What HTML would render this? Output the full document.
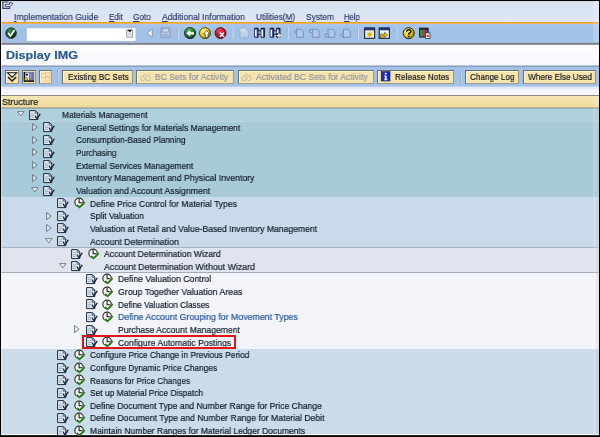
<!DOCTYPE html>
<html><head><meta charset="utf-8"><title>Display IMG</title>
<style>
html,body{margin:0;padding:0;}
body{width:600px;height:437px;overflow:hidden;background:#fff;position:relative;font-family:"Liberation Sans",sans-serif;}
#w{position:absolute;left:1.5px;top:1px;width:596.5px;height:434px;background:#fff;overflow:hidden;}
.a{position:absolute;}
.t{will-change:transform;-webkit-text-stroke:0.2px currentColor;position:absolute;white-space:nowrap;transform-origin:0 0;display:block;}
.t u{text-decoration:underline;}
.i{position:absolute;overflow:visible;}
.band{position:absolute;left:0;width:600px;}
.b{position:absolute;top:70.2px;height:13.4px;box-sizing:border-box;background:#f7e3ac;border:1px solid;border-color:#6a6e68 #9c9883 #9c9883 #6a6e68;box-shadow:inset 1px 1px 0 #fdf3d2;}
.b.dis{background:#f6e3ae;border-color:#70746e #a29e89 #a29e89 #70746e;}
.sep{position:absolute;width:1px;background:#9cb2d2;box-shadow:1px 0 0 #bdd0ec;}
</style></head><body>
<!-- menu bar -->
<div class="band" style="top:1px;height:21px;background:linear-gradient(#c9d2e0 0,#d8e3f2 1.5px,#dae4f3 13px,#e1e5f8 18px,#e4e6fa 21px);"></div>
<div class="band" style="top:22px;height:1px;background:#e8a234;"></div>
<div class="band" style="top:23px;height:1px;background:#ebb353;"></div>
<!-- std toolbar -->
<div class="band" style="top:24px;height:18px;background:linear-gradient(#a9c7ea,#a1c1e7 30%,#a1c1e7 90%,#a7c3e6);"></div>
<div class="band" style="top:42px;height:1px;background:#a6b6cf;"></div>
<div class="band" style="top:43px;height:1px;background:#7b8492;"></div>
<div class="band" style="top:44px;height:1px;background:#8f97a4;"></div>
<!-- title -->
<div class="band" style="top:45px;height:20px;background:linear-gradient(#fff,#f6f8fc);"></div>
<div class="band" style="top:65px;height:1px;background:#b9c6d9;"></div>
<div class="band" style="top:66px;height:1px;background:#8a9fbe;"></div>
<!-- app toolbar -->
<div class="band" style="top:67px;height:19px;background:#a4c2e7;"></div>
<div class="band" style="top:86px;height:1px;background:#bdd1ec;"></div>
<div class="band" style="top:87px;height:8px;background:linear-gradient(#dfe7f5 0,#e9edf8 2px,#f6f6fb 3.5px,#f7f6fa 8px);"></div>
<div class="band" style="top:95px;height:1px;background:#8d8b7d;"></div>
<!-- tree header -->
<div class="band" style="top:96px;height:11px;background:linear-gradient(#f6e6b4,#efd99c);"></div>
<div class="band" style="top:107px;height:1px;background:#b9b494;"></div>
<!-- tree bands -->
<div class="band" style="top:108px;height:13px;background:#b1d0dd;border-top:1px solid #98aab4;box-sizing:border-box"></div>
<div class="band" style="top:121px;height:76px;background:#a9cbd9;border-top:1px solid #b9d4df;box-sizing:border-box"></div>
<div class="band" style="top:197px;height:51px;background:#c9dbea;"></div>
<div class="band" style="top:247px;height:25px;background:#dfe4ee;border-top:1px solid #a9b2bc;box-sizing:border-box"></div>
<div class="band" style="top:272px;height:77px;background:#f2f4f9;border-top:1px solid #a3acb6;box-sizing:border-box"></div>
<div class="band" style="top:349px;height:85px;background:#cadbea;"></div>
<div class="band" style="top:434px;height:1px;background:#fafbfd;"></div>
<div class="band" style="top:435px;height:2px;background:linear-gradient(#6a6a6a 0,#000 0.8px);"></div>
<!-- right edge -->
<div class="a" style="left:593px;top:95.5px;width:5.8px;height:338.5px;background:rgba(255,255,255,0.14);"></div><div class="a" style="left:596.2px;top:108px;width:2.6px;height:326px;background:rgba(160,170,180,0.18);"></div>
<div class="a" style="left:593px;top:1px;width:5.8px;height:41px;background:rgba(255,255,255,0.2);"></div><div class="a" style="left:598.7px;top:0;width:1.3px;height:437px;background:#000;"></div>
<div class="a" style="left:0;top:0;width:1px;height:437px;background:#000;"></div><div class="a" style="left:1px;top:1px;width:1px;height:434px;background:rgba(255,255,255,0.35);"></div>
<div class="a" style="left:0;top:0;width:600px;height:1px;background:#000;"></div>

<span class="t" style="left:13.80px;top:11.60px;font-size:9.8px;line-height:9.8px;color:#2b3f6b;transform:scaleX(0.8782);"><u>I</u>mplementation Guide</span>
<span class="t" style="left:108.80px;top:11.60px;font-size:9.8px;line-height:9.8px;color:#2b3f6b;transform:scaleX(0.8113);"><u>E</u>dit</span>
<span class="t" style="left:133.00px;top:11.60px;font-size:9.8px;line-height:9.8px;color:#2b3f6b;transform:scaleX(0.8378);"><u>G</u>oto</span>
<span class="t" style="left:162.00px;top:11.60px;font-size:9.8px;line-height:9.8px;color:#2b3f6b;transform:scaleX(0.8756);"><u>A</u>dditional Information</span>
<span class="t" style="left:255.80px;top:11.60px;font-size:9.8px;line-height:9.8px;color:#2b3f6b;transform:scaleX(0.8471);">Utilities(<u>M</u>)</span>
<span class="t" style="left:305.80px;top:11.60px;font-size:9.8px;line-height:9.8px;color:#2b3f6b;transform:scaleX(0.8570);">S<u>y</u>stem</span>
<span class="t" style="left:343.80px;top:11.60px;font-size:9.8px;line-height:9.8px;color:#2b3f6b;transform:scaleX(0.7789);"><u>H</u>elp</span>
<!-- window icon -->
<svg class="i" style="left:2px;top:1px" width="12" height="9" viewBox="0 0 12 9"><path d="M6.4 1 H0.9 V7.4 H7.6 V6.2" fill="none" stroke="#2c406a" stroke-width="1.2"/><path d="M3.4 3.4 H7.6 V1.4 L10.8 2.2 L8.2 5.6 H3.4 Z" fill="#f4f6fb" stroke="#2c406a" stroke-width="0.9"/></svg>

<!-- toolbar icons -->
<svg class="i" style="left:0;top:23.7px" width="600" height="19" viewBox="0 23.7 600 19">
 <defs>
  <radialGradient id="gg" cx="0.4" cy="0.3" r="0.75"><stop offset="0" stop-color="#58b85a"/><stop offset="0.55" stop-color="#2a7a32"/><stop offset="1" stop-color="#0e2c14"/></radialGradient>
  <radialGradient id="gd" cx="0.4" cy="0.25" r="0.8"><stop offset="0" stop-color="#3c9a44"/><stop offset="0.5" stop-color="#1c5426"/><stop offset="1" stop-color="#081c0c"/></radialGradient>
  <radialGradient id="gy" cx="0.35" cy="0.3" r="0.8"><stop offset="0" stop-color="#fff27a"/><stop offset="0.5" stop-color="#e8cc1c"/><stop offset="1" stop-color="#8a7408"/></radialGradient>
  <radialGradient id="gr" cx="0.4" cy="0.3" r="0.8"><stop offset="0" stop-color="#f0505a"/><stop offset="0.5" stop-color="#c81828"/><stop offset="1" stop-color="#5a0810"/></radialGradient>
 </defs>
 <circle cx="11.1" cy="32.8" r="5.3" fill="url(#gd)" stroke="#0c2010" stroke-width="0.7"/>
 <path d="M8.0 32.6 L10.3 35.6 L14.6 29.6" fill="none" stroke="#fff" stroke-width="1.8"/>
 <rect x="26.8" y="27" width="108.7" height="13.6" fill="#fff"/>
 <rect x="26.8" y="27" width="108.7" height="0.9" fill="#9ab0d0"/>
 <rect x="126.8" y="29.8" width="5.8" height="7" fill="#eef1f5" stroke="#7d8794" stroke-width="0.8"/>
 <rect x="128.6" y="32.6" width="2.4" height="2.6" fill="#c9ced6"/>
 <path d="M127.4 29.4 H132.2 L129.8 31.9 Z" fill="#111"/>
 <path d="M152.2 28.8 V37 L147.2 32.9 Z" fill="#eef3fa" stroke="#8794a6" stroke-width="0.9"/>
 <rect x="160.8" y="27.6" width="9.4" height="9.8" rx="1" fill="#b3c7e3" stroke="#8b9bb2" stroke-width="1"/>
 <rect x="162.6" y="28" width="5.8" height="3.8" fill="#c9d8ec" stroke="#8b9bb2" stroke-width="0.7"/>
 <rect x="162.4" y="33.8" width="6.2" height="3.2" fill="#9eb3d0"/>
 <rect x="177.4" y="27.5" width="0.8" height="11.2" fill="#98b2d8"/><rect x="178.2" y="27.5" width="0.9" height="11.2" fill="#cfdff4"/>
 <circle cx="190" cy="32.8" r="5.6" fill="url(#gg)" stroke="#0e2812" stroke-width="0.8"/>
 <path d="M186.4 33 L190.2 29.8 V31.9 H194 V34.2 H190.2 V36.2 Z" fill="#fff"/>
 <circle cx="205" cy="32.8" r="5.5" fill="url(#gy)" stroke="#3a3208" stroke-width="0.8"/>
 <path d="M206.6 30.2 L209.6 33.6 H208 V37 H205.2 V33.6 H203.6 Z" fill="#fff" stroke="#222" stroke-width="0.6"/>
 <circle cx="220.5" cy="32.8" r="5.5" fill="url(#gr)" stroke="#3a080c" stroke-width="0.8"/>
 <path d="M219.8 32.2 L224 36.6 M224 32.2 L219.8 36.6" stroke="#fff" stroke-width="1.5"/>
 <rect x="231.8" y="27.5" width="0.8" height="11.2" fill="#98b2d8"/><rect x="232.6" y="27.5" width="0.9" height="11.2" fill="#cfdff4"/>
 <path d="M240 28 H246 L248.4 30.2 V37.4 H240 Z" fill="#bfd0e9" stroke="#9cafcb" stroke-width="0.9"/>
 <rect x="240.4" y="28.4" width="5" height="3" fill="#d3dff1"/>
 <g>
  <rect x="254.2" y="27.4" width="4.4" height="10" rx="1" fill="#141c3c"/><rect x="260.6" y="27.4" width="4.4" height="10" rx="1" fill="#141c3c"/>
  <rect x="258" y="30" width="3.4" height="4.4" fill="#141c3c"/><rect x="258.4" y="31" width="2.4" height="2.4" fill="#9fb0d4"/>
  <rect x="255.0" y="29.2" width="2" height="7.2" fill="#f4f7fc"/><rect x="261.4" y="29.2" width="2" height="7.2" fill="#f4f7fc"/>
  <rect x="256.7" y="29.4" width="1" height="7" fill="#3a4c84"/><rect x="263.1" y="29.4" width="1" height="7" fill="#3a4c84"/>
 </g>
 <g>
  <rect x="269.7" y="27.4" width="4.4" height="10" rx="1" fill="#141c3c"/><rect x="276.1" y="27.4" width="4.4" height="10" rx="1" fill="#141c3c"/>
  <rect x="273.5" y="30" width="3.4" height="4.4" fill="#141c3c"/><rect x="273.9" y="31" width="2.4" height="2.4" fill="#9fb0d4"/>
  <rect x="270.5" y="29.2" width="2" height="7.2" fill="#f4f7fc"/><rect x="276.9" y="29.2" width="2" height="3.6" fill="#f4f7fc"/>
  <rect x="272.2" y="29.4" width="1" height="7" fill="#3a4c84"/><rect x="278.6" y="29.4" width="1" height="3.4" fill="#3a4c84"/>
  <path d="M276.6 35.2 H281.2 M278.9 33 V37.4" stroke="#fff" stroke-width="1.3"/>
 </g>
 <rect x="287" y="27.5" width="0.8" height="11.2" fill="#98b2d8"/><rect x="287.8" y="27.5" width="0.9" height="11.2" fill="#cfdff4"/>
 <g fill="#b0c8e8" stroke="#7892b8" stroke-width="1">
  <path d="M296.6 29 H301.4 L303.4 31 V37 H296.6 Z"/><path d="M294 31.6 L296.6 29.6 V33.6 Z"/>
  <path d="M312.4 29 H317.2 L319.2 31 V37 H312.4 Z"/><path d="M309.8 29.4 H312.6 V32.4 H309.8 Z"/>
  <path d="M328 29 H332.8 L334.8 31 V37 H328 Z"/><path d="M325.4 33.6 H328.2 V36.8 H325.4 Z"/>
  <path d="M343.4 29 H348.2 L350.2 31 V37 H343.4 Z"/><path d="M340.4 34.6 L343.4 32.2 V37 Z"/>
 </g>
 <rect x="357.2" y="27.5" width="0.8" height="11.2" fill="#98b2d8"/><rect x="358" y="27.5" width="0.9" height="11.2" fill="#cfdff4"/>
 <rect x="364.6" y="27.6" width="10" height="10.4" fill="#f6f0c8" stroke="#16223c" stroke-width="1.1"/>
 <rect x="364.6" y="27.6" width="10" height="2.4" fill="#1f3470"/>
 <path d="M369.6 31.2 V37 M366.8 34.1 H372.4 M367.6 32.1 L371.6 36.1 M371.6 32.1 L367.6 36.1" stroke="#d8b410" stroke-width="1"/>
 <rect x="379.2" y="27.6" width="10.2" height="10.4" fill="#f3f5fa" stroke="#16223c" stroke-width="1.1"/>
 <rect x="379.2" y="27.6" width="10.2" height="2.4" fill="#1f3470"/>
 <path d="M380.6 37.8 V33.8 H384.6 V32 L387.8 34.6 L384.6 37.2 V35.6 H382.8 V37.8 Z" fill="#ecc41c" stroke="#4a3c04" stroke-width="0.6"/>
 <rect x="395.8" y="27.5" width="0.8" height="11.2" fill="#98b2d8"/><rect x="396.6" y="27.5" width="0.9" height="11.2" fill="#cfdff4"/>
 <circle cx="408.7" cy="32.9" r="5.5" fill="url(#gy)" stroke="#2a2406" stroke-width="1"/>
 <path d="M406.7 31.4 Q406.7 29.4 408.8 29.4 Q410.9 29.4 410.9 31.2 Q410.9 32.4 408.8 33.2 V34.4" fill="none" stroke="#1e1a06" stroke-width="1.4"/><rect x="408.1" y="35.4" width="1.5" height="1.5" fill="#1e1a06"/>
 <rect x="419.6" y="27.8" width="8.6" height="9" fill="#1c1c1c" stroke="#1a1a1a" stroke-width="0.8"/>
 <rect x="420.2" y="29.4" width="2.6" height="6.8" fill="#36a43c"/><rect x="422.8" y="29.4" width="2.4" height="6.8" fill="#d42c30"/><rect x="425.2" y="29.4" width="2.6" height="6.8" fill="#3848c8"/>
 <rect x="425.4" y="32.6" width="4.6" height="5.6" fill="#f4f4f8" stroke="#222" stroke-width="0.7"/><rect x="426.8" y="34.6" width="2" height="2" fill="#c02030"/>
</svg>

<!-- title -->
<span class="t" style="left:5.50px;top:49.82px;font-size:11.2px;line-height:11.2px;color:#2b5b8d;transform:scaleX(1.1247);font-weight:bold;">Display IMG</span>

<!-- app toolbar -->
<div class="sep" style="left:57px;top:70px;height:14px;"></div>
<div class="sep" style="left:459.5px;top:70px;height:14px;"></div>
<div class="b" style="left:5.00px;width:13.70px"></div><div class="b" style="left:22.30px;width:13.50px"></div><div class="b dis" style="left:38.90px;width:13.60px"></div><div class="b" style="left:62.30px;width:70.90px"></div><span class="t" style="left:68.00px;top:72.30px;font-size:9.8px;line-height:9.8px;color:#15181c;transform:scaleX(0.8317);">Existing BC Sets</span><div class="b dis" style="left:136.30px;width:97.50px"></div><span class="t" style="left:155.00px;top:72.30px;font-size:9.8px;line-height:9.8px;color:#8f969c;transform:scaleX(0.8761);">BC Sets for Activity</span><svg class="i" style="left:139.50px;top:72.5px" width="12" height="9" viewBox="0 0 12 9"><circle cx="3" cy="5.5" r="2.2" fill="none" stroke="#c4c2ac" stroke-width="1"/><circle cx="8" cy="5.5" r="2.2" fill="none" stroke="#c4c2ac" stroke-width="1"/><path d="M3 3.3 L5 1 L7 2 M8 3.3 L10 1" fill="none" stroke="#c4c2ac" stroke-width="1"/></svg><div class="b dis" style="left:238.00px;width:135.80px"></div><span class="t" style="left:256.30px;top:72.30px;font-size:9.8px;line-height:9.8px;color:#8f969c;transform:scaleX(0.8840);">Activated BC Sets for Activity</span><svg class="i" style="left:241.30px;top:72.5px" width="12" height="9" viewBox="0 0 12 9"><circle cx="3" cy="5.5" r="2.2" fill="none" stroke="#c4c2ac" stroke-width="1"/><circle cx="8" cy="5.5" r="2.2" fill="none" stroke="#c4c2ac" stroke-width="1"/><path d="M3 3.3 L5 1 L7 2 M8 3.3 L10 1" fill="none" stroke="#c4c2ac" stroke-width="1"/></svg><div class="b" style="left:377.20px;width:77.30px"></div><span class="t" style="left:395.00px;top:72.30px;font-size:9.8px;line-height:9.8px;color:#15181c;transform:scaleX(0.8447);">Release Notes</span><div class="b" style="left:464.50px;width:54.30px"></div><span class="t" style="left:470.00px;top:72.30px;font-size:9.8px;line-height:9.8px;color:#15181c;transform:scaleX(0.8333);">Change Log</span><div class="b" style="left:522.50px;width:73.80px"></div><span class="t" style="left:528.00px;top:72.30px;font-size:9.8px;line-height:9.8px;color:#15181c;transform:scaleX(0.8393);">Where Else Used</span>
<svg class="i" style="left:0;top:66px" width="600" height="22" viewBox="0 66 600 22">
 <path d="M7.6 72.8 H16.6 L12.1 77.2 Z" fill="#fff" stroke="#141414" stroke-width="1.1"/>
 <path d="M8 77 L12.1 81 L16.2 77" fill="none" stroke="#141414" stroke-width="1.3"/>
 <rect x="24.2" y="72.2" width="9.6" height="9.2" fill="#eef1f6" stroke="#3a3c44" stroke-width="0.7"/>
 <rect x="29" y="72.8" width="4.4" height="7.4" fill="#6468b4"/><rect x="30" y="73.6" width="1.4" height="6" fill="#9a9cd8"/>
 <path d="M24.4 72 V81 H34" fill="none" stroke="#0c0c10" stroke-width="1.5"/>
 <circle cx="26.8" cy="74.6" r="1.2" fill="#222"/><path d="M24.2 80.2 Q24.4 77.4 26.4 77.4 Q28.2 77.6 28 80.2 Z" fill="#ecd020" stroke="#222" stroke-width="0.4"/>
 <g fill="#f7e7b8" stroke="#e8c98a" stroke-width="0.8"><rect x="41.4" y="73.4" width="4.2" height="4"/><rect x="45.6" y="72.4" width="4.2" height="4"/><rect x="45.6" y="77" width="4.2" height="4"/></g>
 <rect x="381.2" y="71.6" width="8.8" height="9.4" fill="#1c2cb8" stroke="#0c1460" stroke-width="0.6"/>
 <rect x="384.8" y="72.8" width="1.8" height="1.6" fill="#fff"/><path d="M384 75.4 H386.6 V79.4 H387.6 V80.2 H383.8 V79.4 H384.8 V76.2 H384 Z" fill="#fff"/>
</svg>

<!-- Structure header -->
<span class="t" style="left:2.20px;top:97.00px;font-size:9.8px;line-height:9.8px;color:#16181c;transform:scaleX(0.9104);">Structure</span>

<!-- tree -->
<svg class="i" style="left:28.90px;top:109.70px" width="13" height="11" viewBox="0 0 13 11"><path d="M0.6 0.6 H6.4 L8.8 3 V9.6 H0.6 Z" fill="#e1eaf2" stroke="#1a2a42" stroke-width="1.0"/><path d="M6.2 0.6 V3.2 H8.8" fill="none" stroke="#223148" stroke-width="0.7"/><path d="M2 3.8 H5.4 M2 5.6 H5.6 M2 7.4 H4.8" stroke="#8d9cab" stroke-width="0.75"/><path d="M6.3 5.6 Q6.9 8.0 7.9 8.7 L11.3 3.9" fill="none" stroke="#18263c" stroke-width="1.35"/></svg>
<svg class="i" style="left:17.00px;top:111.20px" width="9" height="7" viewBox="0 0 9 7"><path d="M0.6 0.6 H7.0 L3.8 4.9 Z" fill="#f1f5f9" stroke="#65727f" stroke-width="0.9"/></svg>
<span class="t" style="left:61.50px;top:110.10px;font-size:9.8px;line-height:9.8px;color:#111b28;transform:scaleX(0.8577);">Materials Management</span>
<svg class="i" style="left:43.30px;top:122.34px" width="13" height="11" viewBox="0 0 13 11"><path d="M0.6 0.6 H6.4 L8.8 3 V9.6 H0.6 Z" fill="#e1eaf2" stroke="#1a2a42" stroke-width="1.0"/><path d="M6.2 0.6 V3.2 H8.8" fill="none" stroke="#223148" stroke-width="0.7"/><path d="M2 3.8 H5.4 M2 5.6 H5.6 M2 7.4 H4.8" stroke="#8d9cab" stroke-width="0.75"/><path d="M6.3 5.6 Q6.9 8.0 7.9 8.7 L11.3 3.9" fill="none" stroke="#18263c" stroke-width="1.35"/></svg>
<svg class="i" style="left:31.80px;top:123.04px" width="7" height="9" viewBox="0 0 7 9"><path d="M0.6 0.6 V7.6 L5.1 4.1 Z" fill="rgba(255,255,255,0.55)" stroke="#5f6c7a" stroke-width="0.9"/></svg>
<span class="t" style="left:75.80px;top:122.74px;font-size:9.8px;line-height:9.8px;color:#111b28;transform:scaleX(0.8662);">General Settings for Materials Management</span>
<svg class="i" style="left:43.30px;top:134.98px" width="13" height="11" viewBox="0 0 13 11"><path d="M0.6 0.6 H6.4 L8.8 3 V9.6 H0.6 Z" fill="#e1eaf2" stroke="#1a2a42" stroke-width="1.0"/><path d="M6.2 0.6 V3.2 H8.8" fill="none" stroke="#223148" stroke-width="0.7"/><path d="M2 3.8 H5.4 M2 5.6 H5.6 M2 7.4 H4.8" stroke="#8d9cab" stroke-width="0.75"/><path d="M6.3 5.6 Q6.9 8.0 7.9 8.7 L11.3 3.9" fill="none" stroke="#18263c" stroke-width="1.35"/></svg>
<svg class="i" style="left:31.80px;top:135.68px" width="7" height="9" viewBox="0 0 7 9"><path d="M0.6 0.6 V7.6 L5.1 4.1 Z" fill="rgba(255,255,255,0.55)" stroke="#5f6c7a" stroke-width="0.9"/></svg>
<span class="t" style="left:75.80px;top:135.38px;font-size:9.8px;line-height:9.8px;color:#111b28;transform:scaleX(0.8445);">Consumption-Based Planning</span>
<svg class="i" style="left:43.30px;top:147.62px" width="13" height="11" viewBox="0 0 13 11"><path d="M0.6 0.6 H6.4 L8.8 3 V9.6 H0.6 Z" fill="#e1eaf2" stroke="#1a2a42" stroke-width="1.0"/><path d="M6.2 0.6 V3.2 H8.8" fill="none" stroke="#223148" stroke-width="0.7"/><path d="M2 3.8 H5.4 M2 5.6 H5.6 M2 7.4 H4.8" stroke="#8d9cab" stroke-width="0.75"/><path d="M6.3 5.6 Q6.9 8.0 7.9 8.7 L11.3 3.9" fill="none" stroke="#18263c" stroke-width="1.35"/></svg>
<svg class="i" style="left:31.80px;top:148.32px" width="7" height="9" viewBox="0 0 7 9"><path d="M0.6 0.6 V7.6 L5.1 4.1 Z" fill="rgba(255,255,255,0.55)" stroke="#5f6c7a" stroke-width="0.9"/></svg>
<span class="t" style="left:75.80px;top:148.02px;font-size:9.8px;line-height:9.8px;color:#111b28;transform:scaleX(0.8260);">Purchasing</span>
<svg class="i" style="left:43.30px;top:160.26px" width="13" height="11" viewBox="0 0 13 11"><path d="M0.6 0.6 H6.4 L8.8 3 V9.6 H0.6 Z" fill="#e1eaf2" stroke="#1a2a42" stroke-width="1.0"/><path d="M6.2 0.6 V3.2 H8.8" fill="none" stroke="#223148" stroke-width="0.7"/><path d="M2 3.8 H5.4 M2 5.6 H5.6 M2 7.4 H4.8" stroke="#8d9cab" stroke-width="0.75"/><path d="M6.3 5.6 Q6.9 8.0 7.9 8.7 L11.3 3.9" fill="none" stroke="#18263c" stroke-width="1.35"/></svg>
<svg class="i" style="left:31.80px;top:160.96px" width="7" height="9" viewBox="0 0 7 9"><path d="M0.6 0.6 V7.6 L5.1 4.1 Z" fill="rgba(255,255,255,0.55)" stroke="#5f6c7a" stroke-width="0.9"/></svg>
<span class="t" style="left:75.80px;top:160.66px;font-size:9.8px;line-height:9.8px;color:#111b28;transform:scaleX(0.8606);">External Services Management</span>
<svg class="i" style="left:43.30px;top:172.90px" width="13" height="11" viewBox="0 0 13 11"><path d="M0.6 0.6 H6.4 L8.8 3 V9.6 H0.6 Z" fill="#e1eaf2" stroke="#1a2a42" stroke-width="1.0"/><path d="M6.2 0.6 V3.2 H8.8" fill="none" stroke="#223148" stroke-width="0.7"/><path d="M2 3.8 H5.4 M2 5.6 H5.6 M2 7.4 H4.8" stroke="#8d9cab" stroke-width="0.75"/><path d="M6.3 5.6 Q6.9 8.0 7.9 8.7 L11.3 3.9" fill="none" stroke="#18263c" stroke-width="1.35"/></svg>
<svg class="i" style="left:31.80px;top:173.60px" width="7" height="9" viewBox="0 0 7 9"><path d="M0.6 0.6 V7.6 L5.1 4.1 Z" fill="rgba(255,255,255,0.55)" stroke="#5f6c7a" stroke-width="0.9"/></svg>
<span class="t" style="left:75.80px;top:173.30px;font-size:9.8px;line-height:9.8px;color:#111b28;transform:scaleX(0.8856);">Inventory Management and Physical Inventory</span>
<svg class="i" style="left:43.30px;top:185.54px" width="13" height="11" viewBox="0 0 13 11"><path d="M0.6 0.6 H6.4 L8.8 3 V9.6 H0.6 Z" fill="#e1eaf2" stroke="#1a2a42" stroke-width="1.0"/><path d="M6.2 0.6 V3.2 H8.8" fill="none" stroke="#223148" stroke-width="0.7"/><path d="M2 3.8 H5.4 M2 5.6 H5.6 M2 7.4 H4.8" stroke="#8d9cab" stroke-width="0.75"/><path d="M6.3 5.6 Q6.9 8.0 7.9 8.7 L11.3 3.9" fill="none" stroke="#18263c" stroke-width="1.35"/></svg>
<svg class="i" style="left:31.10px;top:187.04px" width="9" height="7" viewBox="0 0 9 7"><path d="M0.6 0.6 H7.0 L3.8 4.9 Z" fill="#f1f5f9" stroke="#65727f" stroke-width="0.9"/></svg>
<span class="t" style="left:75.80px;top:185.94px;font-size:9.8px;line-height:9.8px;color:#111b28;transform:scaleX(0.8935);">Valuation and Account Assignment</span>
<svg class="i" style="left:57.00px;top:198.18px" width="13" height="11" viewBox="0 0 13 11"><path d="M0.6 0.6 H6.4 L8.8 3 V9.6 H0.6 Z" fill="#e1eaf2" stroke="#1a2a42" stroke-width="1.0"/><path d="M6.2 0.6 V3.2 H8.8" fill="none" stroke="#223148" stroke-width="0.7"/><path d="M2 3.8 H5.4 M2 5.6 H5.6 M2 7.4 H4.8" stroke="#8d9cab" stroke-width="0.75"/><path d="M6.3 5.6 Q6.9 8.0 7.9 8.7 L11.3 3.9" fill="none" stroke="#18263c" stroke-width="1.35"/></svg>
<svg class="i" style="left:74.10px;top:197.38px" width="13" height="12" viewBox="0 0 13 12"><circle cx="5.1" cy="5.4" r="4.25" fill="#f7f9f7" stroke="#26321f" stroke-width="1.15"/><path d="M5.1 1.9 V5.7 H8.3" fill="none" stroke="#111" stroke-width="1.05"/><path d="M3.0 8.0 L5.5 10.2 L10.8 5.2" fill="none" stroke="#2f7a1c" stroke-width="1.75"/></svg>
<span class="t" style="left:89.90px;top:198.58px;font-size:9.8px;line-height:9.8px;color:#111b28;transform:scaleX(0.8737);">Define Price Control for Material Types</span>
<svg class="i" style="left:57.00px;top:210.82px" width="13" height="11" viewBox="0 0 13 11"><path d="M0.6 0.6 H6.4 L8.8 3 V9.6 H0.6 Z" fill="#e1eaf2" stroke="#1a2a42" stroke-width="1.0"/><path d="M6.2 0.6 V3.2 H8.8" fill="none" stroke="#223148" stroke-width="0.7"/><path d="M2 3.8 H5.4 M2 5.6 H5.6 M2 7.4 H4.8" stroke="#8d9cab" stroke-width="0.75"/><path d="M6.3 5.6 Q6.9 8.0 7.9 8.7 L11.3 3.9" fill="none" stroke="#18263c" stroke-width="1.35"/></svg>
<svg class="i" style="left:45.90px;top:211.52px" width="7" height="9" viewBox="0 0 7 9"><path d="M0.6 0.6 V7.6 L5.1 4.1 Z" fill="rgba(255,255,255,0.55)" stroke="#5f6c7a" stroke-width="0.9"/></svg>
<span class="t" style="left:89.90px;top:211.22px;font-size:9.8px;line-height:9.8px;color:#111b28;transform:scaleX(0.8704);">Split Valuation</span>
<svg class="i" style="left:57.00px;top:223.46px" width="13" height="11" viewBox="0 0 13 11"><path d="M0.6 0.6 H6.4 L8.8 3 V9.6 H0.6 Z" fill="#e1eaf2" stroke="#1a2a42" stroke-width="1.0"/><path d="M6.2 0.6 V3.2 H8.8" fill="none" stroke="#223148" stroke-width="0.7"/><path d="M2 3.8 H5.4 M2 5.6 H5.6 M2 7.4 H4.8" stroke="#8d9cab" stroke-width="0.75"/><path d="M6.3 5.6 Q6.9 8.0 7.9 8.7 L11.3 3.9" fill="none" stroke="#18263c" stroke-width="1.35"/></svg>
<svg class="i" style="left:45.90px;top:224.16px" width="7" height="9" viewBox="0 0 7 9"><path d="M0.6 0.6 V7.6 L5.1 4.1 Z" fill="rgba(255,255,255,0.55)" stroke="#5f6c7a" stroke-width="0.9"/></svg>
<span class="t" style="left:89.90px;top:223.86px;font-size:9.8px;line-height:9.8px;color:#111b28;transform:scaleX(0.8770);">Valuation at Retail and Value-Based Inventory Management</span>
<svg class="i" style="left:57.00px;top:236.10px" width="13" height="11" viewBox="0 0 13 11"><path d="M0.6 0.6 H6.4 L8.8 3 V9.6 H0.6 Z" fill="#e1eaf2" stroke="#1a2a42" stroke-width="1.0"/><path d="M6.2 0.6 V3.2 H8.8" fill="none" stroke="#223148" stroke-width="0.7"/><path d="M2 3.8 H5.4 M2 5.6 H5.6 M2 7.4 H4.8" stroke="#8d9cab" stroke-width="0.75"/><path d="M6.3 5.6 Q6.9 8.0 7.9 8.7 L11.3 3.9" fill="none" stroke="#18263c" stroke-width="1.35"/></svg>
<svg class="i" style="left:45.20px;top:237.60px" width="9" height="7" viewBox="0 0 9 7"><path d="M0.6 0.6 H7.0 L3.8 4.9 Z" fill="#f1f5f9" stroke="#65727f" stroke-width="0.9"/></svg>
<span class="t" style="left:89.90px;top:236.50px;font-size:9.8px;line-height:9.8px;color:#111b28;transform:scaleX(0.8967);">Account Determination</span>
<svg class="i" style="left:71.30px;top:248.74px" width="13" height="11" viewBox="0 0 13 11"><path d="M0.6 0.6 H6.4 L8.8 3 V9.6 H0.6 Z" fill="#e1eaf2" stroke="#1a2a42" stroke-width="1.0"/><path d="M6.2 0.6 V3.2 H8.8" fill="none" stroke="#223148" stroke-width="0.7"/><path d="M2 3.8 H5.4 M2 5.6 H5.6 M2 7.4 H4.8" stroke="#8d9cab" stroke-width="0.75"/><path d="M6.3 5.6 Q6.9 8.0 7.9 8.7 L11.3 3.9" fill="none" stroke="#18263c" stroke-width="1.35"/></svg>
<svg class="i" style="left:88.20px;top:247.94px" width="13" height="12" viewBox="0 0 13 12"><circle cx="5.1" cy="5.4" r="4.25" fill="#f7f9f7" stroke="#26321f" stroke-width="1.15"/><path d="M5.1 1.9 V5.7 H8.3" fill="none" stroke="#111" stroke-width="1.05"/><path d="M3.0 8.0 L5.5 10.2 L10.8 5.2" fill="none" stroke="#2f7a1c" stroke-width="1.75"/></svg>
<span class="t" style="left:104.00px;top:249.14px;font-size:9.8px;line-height:9.8px;color:#111b28;transform:scaleX(0.8825);">Account Determination Wizard</span>
<svg class="i" style="left:71.30px;top:261.38px" width="13" height="11" viewBox="0 0 13 11"><path d="M0.6 0.6 H6.4 L8.8 3 V9.6 H0.6 Z" fill="#e1eaf2" stroke="#1a2a42" stroke-width="1.0"/><path d="M6.2 0.6 V3.2 H8.8" fill="none" stroke="#223148" stroke-width="0.7"/><path d="M2 3.8 H5.4 M2 5.6 H5.6 M2 7.4 H4.8" stroke="#8d9cab" stroke-width="0.75"/><path d="M6.3 5.6 Q6.9 8.0 7.9 8.7 L11.3 3.9" fill="none" stroke="#18263c" stroke-width="1.35"/></svg>
<svg class="i" style="left:59.30px;top:262.88px" width="9" height="7" viewBox="0 0 9 7"><path d="M0.6 0.6 H7.0 L3.8 4.9 Z" fill="#f1f5f9" stroke="#65727f" stroke-width="0.9"/></svg>
<span class="t" style="left:104.00px;top:261.78px;font-size:9.8px;line-height:9.8px;color:#111b28;transform:scaleX(0.8972);">Account Determination Without Wizard</span>
<svg class="i" style="left:85.90px;top:274.02px" width="13" height="11" viewBox="0 0 13 11"><path d="M0.6 0.6 H6.4 L8.8 3 V9.6 H0.6 Z" fill="#e1eaf2" stroke="#1a2a42" stroke-width="1.0"/><path d="M6.2 0.6 V3.2 H8.8" fill="none" stroke="#223148" stroke-width="0.7"/><path d="M2 3.8 H5.4 M2 5.6 H5.6 M2 7.4 H4.8" stroke="#8d9cab" stroke-width="0.75"/><path d="M6.3 5.6 Q6.9 8.0 7.9 8.7 L11.3 3.9" fill="none" stroke="#18263c" stroke-width="1.35"/></svg>
<svg class="i" style="left:102.30px;top:273.22px" width="13" height="12" viewBox="0 0 13 12"><circle cx="5.1" cy="5.4" r="4.25" fill="#f7f9f7" stroke="#26321f" stroke-width="1.15"/><path d="M5.1 1.9 V5.7 H8.3" fill="none" stroke="#111" stroke-width="1.05"/><path d="M3.0 8.0 L5.5 10.2 L10.8 5.2" fill="none" stroke="#2f7a1c" stroke-width="1.75"/></svg>
<span class="t" style="left:118.10px;top:274.42px;font-size:9.8px;line-height:9.8px;color:#111b28;transform:scaleX(0.8834);">Define Valuation Control</span>
<svg class="i" style="left:85.90px;top:286.66px" width="13" height="11" viewBox="0 0 13 11"><path d="M0.6 0.6 H6.4 L8.8 3 V9.6 H0.6 Z" fill="#e1eaf2" stroke="#1a2a42" stroke-width="1.0"/><path d="M6.2 0.6 V3.2 H8.8" fill="none" stroke="#223148" stroke-width="0.7"/><path d="M2 3.8 H5.4 M2 5.6 H5.6 M2 7.4 H4.8" stroke="#8d9cab" stroke-width="0.75"/><path d="M6.3 5.6 Q6.9 8.0 7.9 8.7 L11.3 3.9" fill="none" stroke="#18263c" stroke-width="1.35"/></svg>
<svg class="i" style="left:102.30px;top:285.86px" width="13" height="12" viewBox="0 0 13 12"><circle cx="5.1" cy="5.4" r="4.25" fill="#f7f9f7" stroke="#26321f" stroke-width="1.15"/><path d="M5.1 1.9 V5.7 H8.3" fill="none" stroke="#111" stroke-width="1.05"/><path d="M3.0 8.0 L5.5 10.2 L10.8 5.2" fill="none" stroke="#2f7a1c" stroke-width="1.75"/></svg>
<span class="t" style="left:118.10px;top:287.06px;font-size:9.8px;line-height:9.8px;color:#111b28;transform:scaleX(0.8978);">Group Together Valuation Areas</span>
<svg class="i" style="left:85.90px;top:299.30px" width="13" height="11" viewBox="0 0 13 11"><path d="M0.6 0.6 H6.4 L8.8 3 V9.6 H0.6 Z" fill="#e1eaf2" stroke="#1a2a42" stroke-width="1.0"/><path d="M6.2 0.6 V3.2 H8.8" fill="none" stroke="#223148" stroke-width="0.7"/><path d="M2 3.8 H5.4 M2 5.6 H5.6 M2 7.4 H4.8" stroke="#8d9cab" stroke-width="0.75"/><path d="M6.3 5.6 Q6.9 8.0 7.9 8.7 L11.3 3.9" fill="none" stroke="#18263c" stroke-width="1.35"/></svg>
<svg class="i" style="left:102.30px;top:298.50px" width="13" height="12" viewBox="0 0 13 12"><circle cx="5.1" cy="5.4" r="4.25" fill="#f7f9f7" stroke="#26321f" stroke-width="1.15"/><path d="M5.1 1.9 V5.7 H8.3" fill="none" stroke="#111" stroke-width="1.05"/><path d="M3.0 8.0 L5.5 10.2 L10.8 5.2" fill="none" stroke="#2f7a1c" stroke-width="1.75"/></svg>
<span class="t" style="left:118.10px;top:299.70px;font-size:9.8px;line-height:9.8px;color:#111b28;transform:scaleX(0.8403);">Define Valuation Classes</span>
<svg class="i" style="left:85.90px;top:311.94px" width="13" height="11" viewBox="0 0 13 11"><path d="M0.6 0.6 H6.4 L8.8 3 V9.6 H0.6 Z" fill="#e1eaf2" stroke="#1a2a42" stroke-width="1.0"/><path d="M6.2 0.6 V3.2 H8.8" fill="none" stroke="#223148" stroke-width="0.7"/><path d="M2 3.8 H5.4 M2 5.6 H5.6 M2 7.4 H4.8" stroke="#8d9cab" stroke-width="0.75"/><path d="M6.3 5.6 Q6.9 8.0 7.9 8.7 L11.3 3.9" fill="none" stroke="#18263c" stroke-width="1.35"/></svg>
<svg class="i" style="left:102.30px;top:311.14px" width="13" height="12" viewBox="0 0 13 12"><circle cx="5.1" cy="5.4" r="4.25" fill="#f7f9f7" stroke="#26321f" stroke-width="1.15"/><path d="M5.1 1.9 V5.7 H8.3" fill="none" stroke="#111" stroke-width="1.05"/><path d="M3.0 8.0 L5.5 10.2 L10.8 5.2" fill="none" stroke="#2f7a1c" stroke-width="1.75"/></svg>
<span class="t" style="left:118.10px;top:312.34px;font-size:9.8px;line-height:9.8px;color:#245596;transform:scaleX(0.8982);">Define Account Grouping for Movement Types</span>
<svg class="i" style="left:85.90px;top:324.58px" width="13" height="11" viewBox="0 0 13 11"><path d="M0.6 0.6 H6.4 L8.8 3 V9.6 H0.6 Z" fill="#e1eaf2" stroke="#1a2a42" stroke-width="1.0"/><path d="M6.2 0.6 V3.2 H8.8" fill="none" stroke="#223148" stroke-width="0.7"/><path d="M2 3.8 H5.4 M2 5.6 H5.6 M2 7.4 H4.8" stroke="#8d9cab" stroke-width="0.75"/><path d="M6.3 5.6 Q6.9 8.0 7.9 8.7 L11.3 3.9" fill="none" stroke="#18263c" stroke-width="1.35"/></svg>
<svg class="i" style="left:73.50px;top:325.28px" width="7" height="9" viewBox="0 0 7 9"><path d="M0.6 0.6 V7.6 L5.1 4.1 Z" fill="rgba(255,255,255,0.55)" stroke="#5f6c7a" stroke-width="0.9"/></svg>
<span class="t" style="left:118.10px;top:324.98px;font-size:9.8px;line-height:9.8px;color:#111b28;transform:scaleX(0.8775);">Purchase Account Management</span>
<svg class="i" style="left:85.90px;top:337.22px" width="13" height="11" viewBox="0 0 13 11"><path d="M0.6 0.6 H6.4 L8.8 3 V9.6 H0.6 Z" fill="#e1eaf2" stroke="#1a2a42" stroke-width="1.0"/><path d="M6.2 0.6 V3.2 H8.8" fill="none" stroke="#223148" stroke-width="0.7"/><path d="M2 3.8 H5.4 M2 5.6 H5.6 M2 7.4 H4.8" stroke="#8d9cab" stroke-width="0.75"/><path d="M6.3 5.6 Q6.9 8.0 7.9 8.7 L11.3 3.9" fill="none" stroke="#18263c" stroke-width="1.35"/></svg>
<svg class="i" style="left:102.30px;top:336.42px" width="13" height="12" viewBox="0 0 13 12"><circle cx="5.1" cy="5.4" r="4.25" fill="#f7f9f7" stroke="#26321f" stroke-width="1.15"/><path d="M5.1 1.9 V5.7 H8.3" fill="none" stroke="#111" stroke-width="1.05"/><path d="M3.0 8.0 L5.5 10.2 L10.8 5.2" fill="none" stroke="#2f7a1c" stroke-width="1.75"/></svg>
<span class="t" style="left:118.10px;top:337.62px;font-size:9.8px;line-height:9.8px;color:#111b28;transform:scaleX(0.8805);">Configure Automatic Postings</span>
<svg class="i" style="left:57.00px;top:349.86px" width="13" height="11" viewBox="0 0 13 11"><path d="M0.6 0.6 H6.4 L8.8 3 V9.6 H0.6 Z" fill="#e1eaf2" stroke="#1a2a42" stroke-width="1.0"/><path d="M6.2 0.6 V3.2 H8.8" fill="none" stroke="#223148" stroke-width="0.7"/><path d="M2 3.8 H5.4 M2 5.6 H5.6 M2 7.4 H4.8" stroke="#8d9cab" stroke-width="0.75"/><path d="M6.3 5.6 Q6.9 8.0 7.9 8.7 L11.3 3.9" fill="none" stroke="#18263c" stroke-width="1.35"/></svg>
<svg class="i" style="left:74.10px;top:349.06px" width="13" height="12" viewBox="0 0 13 12"><circle cx="5.1" cy="5.4" r="4.25" fill="#f7f9f7" stroke="#26321f" stroke-width="1.15"/><path d="M5.1 1.9 V5.7 H8.3" fill="none" stroke="#111" stroke-width="1.05"/><path d="M3.0 8.0 L5.5 10.2 L10.8 5.2" fill="none" stroke="#2f7a1c" stroke-width="1.75"/></svg>
<span class="t" style="left:89.90px;top:350.26px;font-size:9.8px;line-height:9.8px;color:#111b28;transform:scaleX(0.8531);">Configure Price Change in Previous Period</span>
<svg class="i" style="left:57.00px;top:362.50px" width="13" height="11" viewBox="0 0 13 11"><path d="M0.6 0.6 H6.4 L8.8 3 V9.6 H0.6 Z" fill="#e1eaf2" stroke="#1a2a42" stroke-width="1.0"/><path d="M6.2 0.6 V3.2 H8.8" fill="none" stroke="#223148" stroke-width="0.7"/><path d="M2 3.8 H5.4 M2 5.6 H5.6 M2 7.4 H4.8" stroke="#8d9cab" stroke-width="0.75"/><path d="M6.3 5.6 Q6.9 8.0 7.9 8.7 L11.3 3.9" fill="none" stroke="#18263c" stroke-width="1.35"/></svg>
<svg class="i" style="left:74.10px;top:361.70px" width="13" height="12" viewBox="0 0 13 12"><circle cx="5.1" cy="5.4" r="4.25" fill="#f7f9f7" stroke="#26321f" stroke-width="1.15"/><path d="M5.1 1.9 V5.7 H8.3" fill="none" stroke="#111" stroke-width="1.05"/><path d="M3.0 8.0 L5.5 10.2 L10.8 5.2" fill="none" stroke="#2f7a1c" stroke-width="1.75"/></svg>
<span class="t" style="left:89.90px;top:362.90px;font-size:9.8px;line-height:9.8px;color:#111b28;transform:scaleX(0.8454);">Configure Dynamic Price Changes</span>
<svg class="i" style="left:57.00px;top:375.14px" width="13" height="11" viewBox="0 0 13 11"><path d="M0.6 0.6 H6.4 L8.8 3 V9.6 H0.6 Z" fill="#e1eaf2" stroke="#1a2a42" stroke-width="1.0"/><path d="M6.2 0.6 V3.2 H8.8" fill="none" stroke="#223148" stroke-width="0.7"/><path d="M2 3.8 H5.4 M2 5.6 H5.6 M2 7.4 H4.8" stroke="#8d9cab" stroke-width="0.75"/><path d="M6.3 5.6 Q6.9 8.0 7.9 8.7 L11.3 3.9" fill="none" stroke="#18263c" stroke-width="1.35"/></svg>
<svg class="i" style="left:74.10px;top:374.34px" width="13" height="12" viewBox="0 0 13 12"><circle cx="5.1" cy="5.4" r="4.25" fill="#f7f9f7" stroke="#26321f" stroke-width="1.15"/><path d="M5.1 1.9 V5.7 H8.3" fill="none" stroke="#111" stroke-width="1.05"/><path d="M3.0 8.0 L5.5 10.2 L10.8 5.2" fill="none" stroke="#2f7a1c" stroke-width="1.75"/></svg>
<span class="t" style="left:89.90px;top:375.54px;font-size:9.8px;line-height:9.8px;color:#111b28;transform:scaleX(0.8353);">Reasons for Price Changes</span>
<svg class="i" style="left:57.00px;top:387.78px" width="13" height="11" viewBox="0 0 13 11"><path d="M0.6 0.6 H6.4 L8.8 3 V9.6 H0.6 Z" fill="#e1eaf2" stroke="#1a2a42" stroke-width="1.0"/><path d="M6.2 0.6 V3.2 H8.8" fill="none" stroke="#223148" stroke-width="0.7"/><path d="M2 3.8 H5.4 M2 5.6 H5.6 M2 7.4 H4.8" stroke="#8d9cab" stroke-width="0.75"/><path d="M6.3 5.6 Q6.9 8.0 7.9 8.7 L11.3 3.9" fill="none" stroke="#18263c" stroke-width="1.35"/></svg>
<svg class="i" style="left:74.10px;top:386.98px" width="13" height="12" viewBox="0 0 13 12"><circle cx="5.1" cy="5.4" r="4.25" fill="#f7f9f7" stroke="#26321f" stroke-width="1.15"/><path d="M5.1 1.9 V5.7 H8.3" fill="none" stroke="#111" stroke-width="1.05"/><path d="M3.0 8.0 L5.5 10.2 L10.8 5.2" fill="none" stroke="#2f7a1c" stroke-width="1.75"/></svg>
<span class="t" style="left:89.90px;top:388.18px;font-size:9.8px;line-height:9.8px;color:#111b28;transform:scaleX(0.8580);">Set up Material Price Dispatch</span>
<svg class="i" style="left:57.00px;top:400.42px" width="13" height="11" viewBox="0 0 13 11"><path d="M0.6 0.6 H6.4 L8.8 3 V9.6 H0.6 Z" fill="#e1eaf2" stroke="#1a2a42" stroke-width="1.0"/><path d="M6.2 0.6 V3.2 H8.8" fill="none" stroke="#223148" stroke-width="0.7"/><path d="M2 3.8 H5.4 M2 5.6 H5.6 M2 7.4 H4.8" stroke="#8d9cab" stroke-width="0.75"/><path d="M6.3 5.6 Q6.9 8.0 7.9 8.7 L11.3 3.9" fill="none" stroke="#18263c" stroke-width="1.35"/></svg>
<svg class="i" style="left:74.10px;top:399.62px" width="13" height="12" viewBox="0 0 13 12"><circle cx="5.1" cy="5.4" r="4.25" fill="#f7f9f7" stroke="#26321f" stroke-width="1.15"/><path d="M5.1 1.9 V5.7 H8.3" fill="none" stroke="#111" stroke-width="1.05"/><path d="M3.0 8.0 L5.5 10.2 L10.8 5.2" fill="none" stroke="#2f7a1c" stroke-width="1.75"/></svg>
<span class="t" style="left:89.90px;top:400.82px;font-size:9.8px;line-height:9.8px;color:#111b28;transform:scaleX(0.8783);">Define Document Type and Number Range for Price Change</span>
<svg class="i" style="left:57.00px;top:413.06px" width="13" height="11" viewBox="0 0 13 11"><path d="M0.6 0.6 H6.4 L8.8 3 V9.6 H0.6 Z" fill="#e1eaf2" stroke="#1a2a42" stroke-width="1.0"/><path d="M6.2 0.6 V3.2 H8.8" fill="none" stroke="#223148" stroke-width="0.7"/><path d="M2 3.8 H5.4 M2 5.6 H5.6 M2 7.4 H4.8" stroke="#8d9cab" stroke-width="0.75"/><path d="M6.3 5.6 Q6.9 8.0 7.9 8.7 L11.3 3.9" fill="none" stroke="#18263c" stroke-width="1.35"/></svg>
<svg class="i" style="left:74.10px;top:412.26px" width="13" height="12" viewBox="0 0 13 12"><circle cx="5.1" cy="5.4" r="4.25" fill="#f7f9f7" stroke="#26321f" stroke-width="1.15"/><path d="M5.1 1.9 V5.7 H8.3" fill="none" stroke="#111" stroke-width="1.05"/><path d="M3.0 8.0 L5.5 10.2 L10.8 5.2" fill="none" stroke="#2f7a1c" stroke-width="1.75"/></svg>
<span class="t" style="left:89.90px;top:413.46px;font-size:9.8px;line-height:9.8px;color:#111b28;transform:scaleX(0.8849);">Define Document Type and Number Range for Material Debit</span>
<svg class="i" style="left:57.00px;top:425.70px" width="13" height="11" viewBox="0 0 13 11"><path d="M0.6 0.6 H6.4 L8.8 3 V9.6 H0.6 Z" fill="#e1eaf2" stroke="#1a2a42" stroke-width="1.0"/><path d="M6.2 0.6 V3.2 H8.8" fill="none" stroke="#223148" stroke-width="0.7"/><path d="M2 3.8 H5.4 M2 5.6 H5.6 M2 7.4 H4.8" stroke="#8d9cab" stroke-width="0.75"/><path d="M6.3 5.6 Q6.9 8.0 7.9 8.7 L11.3 3.9" fill="none" stroke="#18263c" stroke-width="1.35"/></svg>
<svg class="i" style="left:74.10px;top:424.90px" width="13" height="12" viewBox="0 0 13 12"><circle cx="5.1" cy="5.4" r="4.25" fill="#f7f9f7" stroke="#26321f" stroke-width="1.15"/><path d="M5.1 1.9 V5.7 H8.3" fill="none" stroke="#111" stroke-width="1.05"/><path d="M3.0 8.0 L5.5 10.2 L10.8 5.2" fill="none" stroke="#2f7a1c" stroke-width="1.75"/></svg>
<span class="t" style="left:89.90px;top:426.10px;font-size:9.8px;line-height:9.8px;color:#111b28;transform:scaleX(0.8660);">Maintain Number Ranges for Material Ledger Documents</span>
<!-- red highlight -->
<div class="a" style="left:82px;top:334.6px;width:154.2px;height:14.4px;box-sizing:border-box;border:2.2px solid #e0141a;"></div>
</body></html>
